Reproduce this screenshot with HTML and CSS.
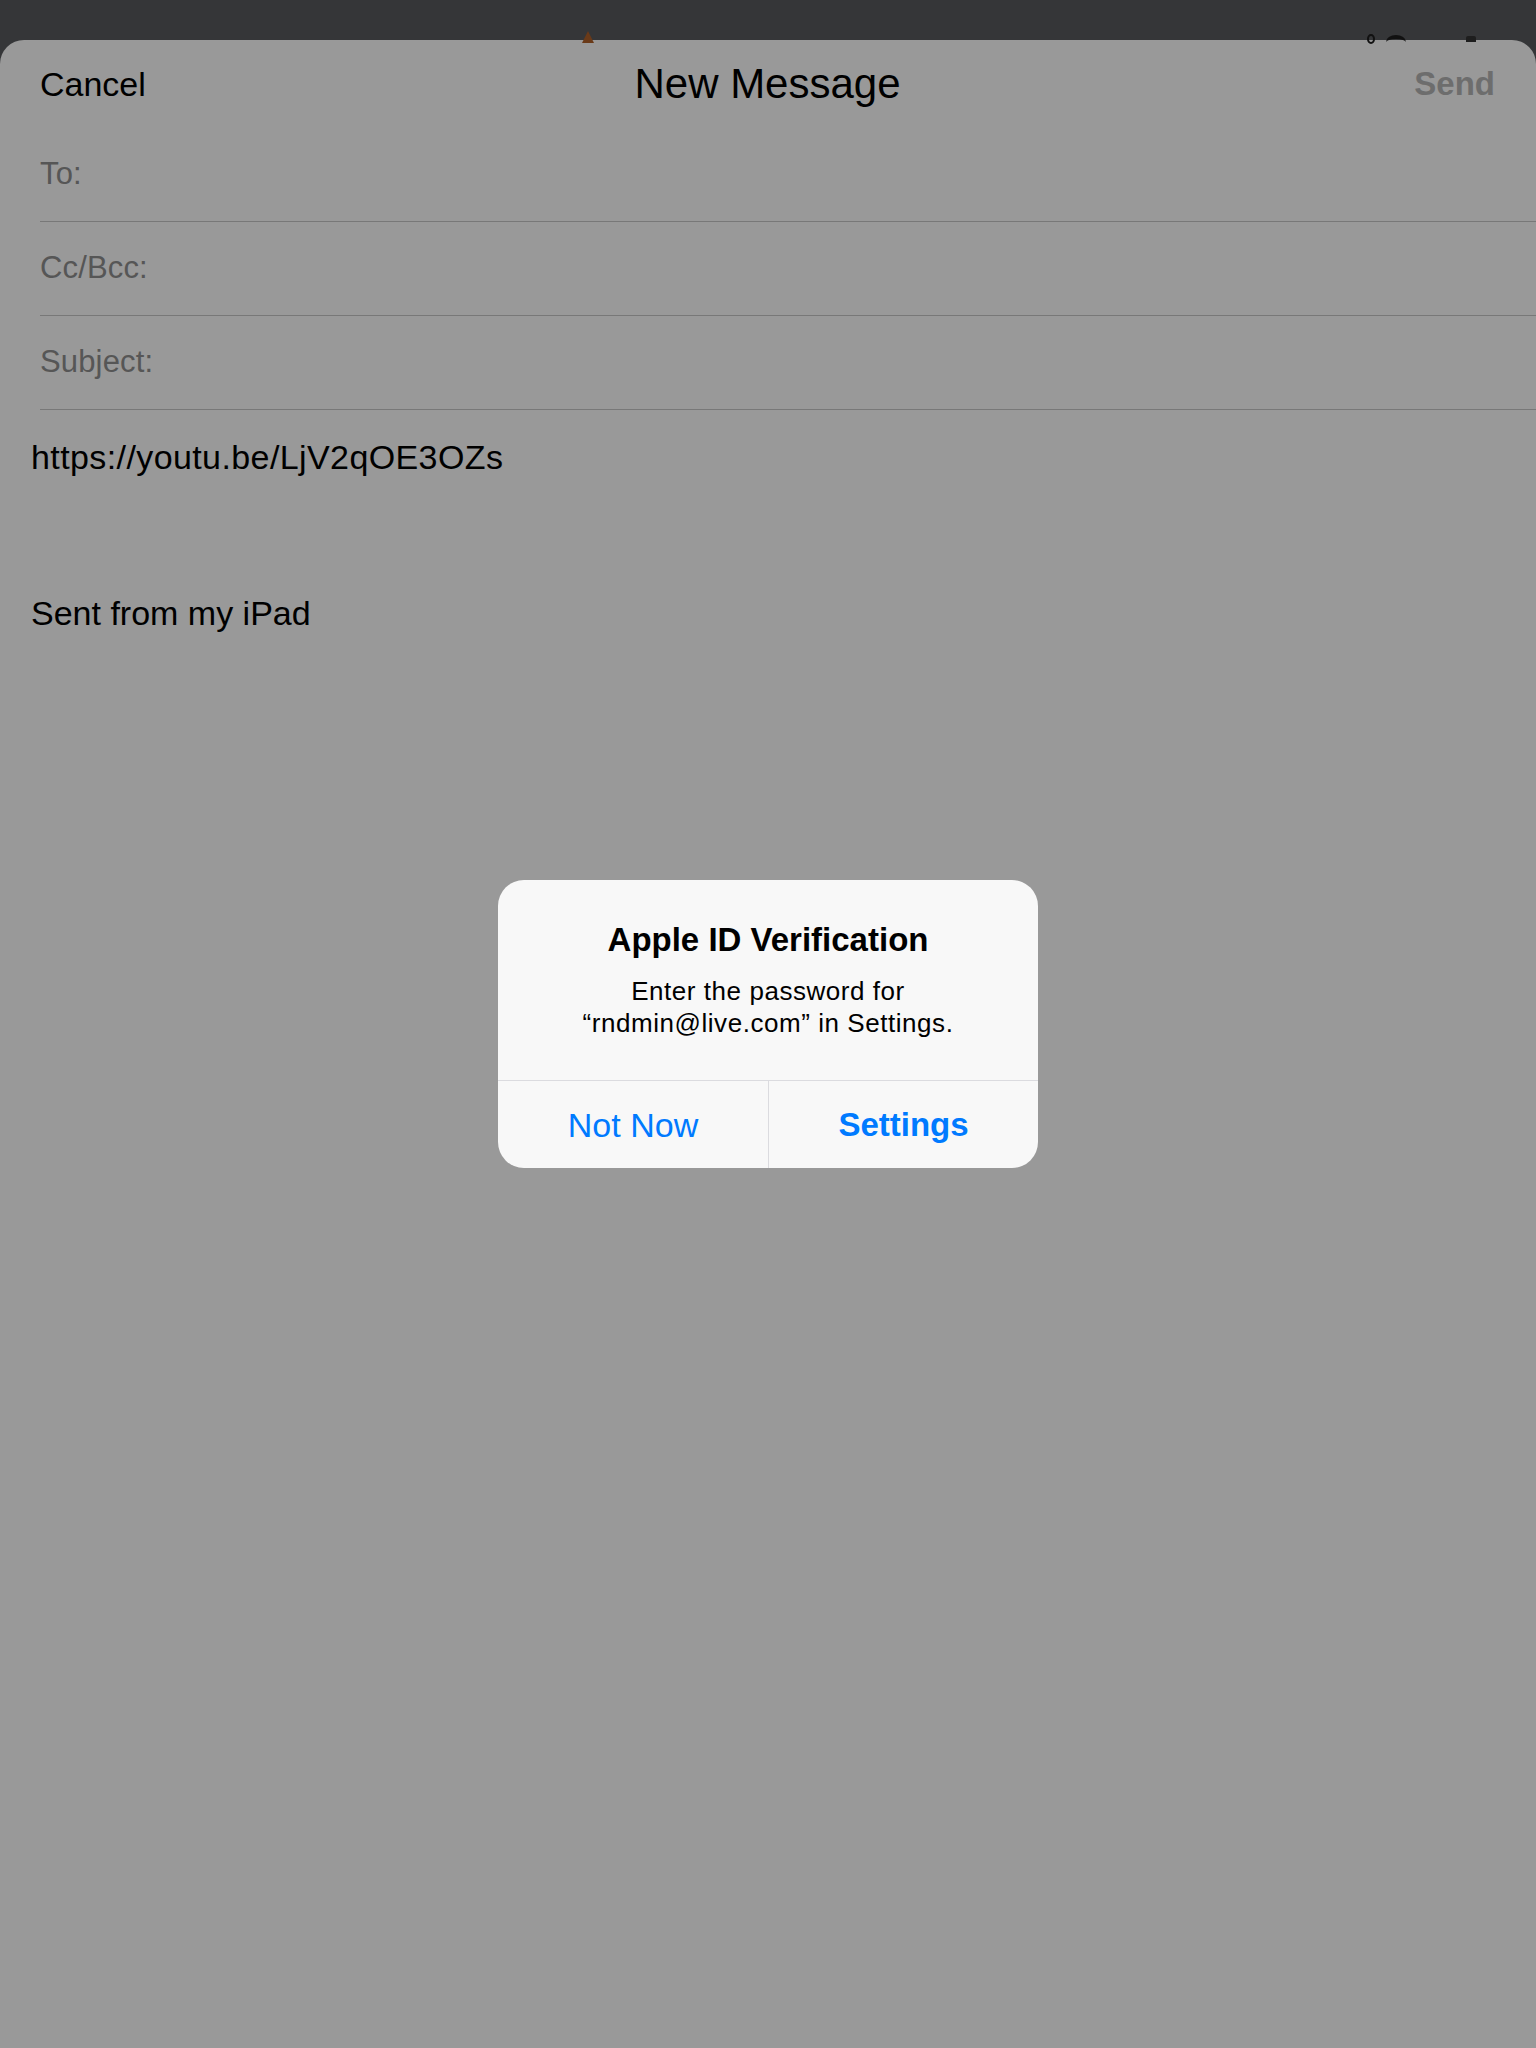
FILE: index.html
```html
<!DOCTYPE html>
<html lang="en">
<head>
<meta charset="utf-8">
<title>New Message</title>
<link rel="stylesheet" href="styles.css">
</head>
<body>
<div class="topbar">
  <span class="peek peek-orange"></span>
  <span class="peek peek-loop"></span>
  <span class="peek peek-arc"></span>
  <span class="peek peek-rect"></span>
</div>
<main class="sheet">
  <header class="header">
    <span class="cancel">Cancel</span>
    <h1 class="title">New Message</h1>
    <span class="send">Send</span>
  </header>
  <div class="field"><span class="label">To:</span></div>
  <div class="field"><span class="label">Cc/Bcc:</span></div>
  <div class="field"><span class="label">Subject:</span></div>
  <div class="body">
    <p class="line line-url">https://youtu.be/LjV2qOE3OZs</p>
    <p class="line">&nbsp;</p>
    <p class="line">&nbsp;</p>
    <p class="line">Sent from my iPad</p>
  </div>
</main>
<div class="alert">
  <div class="alert-content">
    <h2 class="alert-title">Apple ID Verification</h2>
    <p class="alert-message">Enter the password for<br>“rndmin@live.com” in Settings.</p>
  </div>
  <div class="alert-buttons">
    <span class="alert-btn">Not Now</span>
    <span class="alert-btn alert-btn-bold">Settings</span>
  </div>
</div>
</body>
</html>
```
FILE: styles.css
```css
html, body {
  margin: 0;
  padding: 0;
}
body {
  background: #353638;
  font-family: "Liberation Sans", Arial, sans-serif;
  width: 1536px;
  height: 2048px;
  overflow: hidden;
  position: relative;
}
.topbar {
  height: 40px;
  position: relative;
}
.peek {
  position: absolute;
  display: block;
}
.peek-orange {
  left: 582px;
  top: 31px;
  width: 12px;
  height: 12px;
  background: #6a3a18;
  border-radius: 50% 50% 0 0;
  clip-path: polygon(50% 0, 100% 100%, 0 100%);
}
.peek-loop {
  left: 1367px;
  top: 34px;
  width: 8px;
  height: 10px;
  border: 2px solid #111;
  border-radius: 50%;
  box-sizing: border-box;
}
.peek-arc {
  left: 1386px;
  top: 35px;
  width: 20px;
  height: 14px;
  border-top: 4px solid #111;
  border-radius: 50% 50% 0 0;
  box-sizing: border-box;
}
.peek-rect {
  left: 1466px;
  top: 36px;
  width: 10px;
  height: 6px;
  background: #1e1e1e;
  border-radius: 2px 2px 0 0;
}
.sheet {
  background: #999999;
  border-radius: 24px 24px 0 0;
  height: 2008px;
}
.header {
  height: 88px;
  display: grid;
  grid-template-columns: 1fr auto 1fr;
  align-items: center;
  padding: 0 41px 0 40px;
}
.cancel {
  justify-self: start;
  font-size: 34px;
  line-height: 34px;
  color: #000;
}
.title {
  margin: 0;
  font-size: 42px;
  line-height: 38px;
  font-weight: 400;
  color: #000;
}
.send {
  justify-self: end;
  font-size: 33px;
  line-height: 34px;
  font-weight: 700;
  color: #6d6d6d;
}
.field {
  margin-left: 40px;
  height: 93px;
  border-bottom: 1px solid #787878;
  display: flex;
  align-items: center;
  padding-bottom: 2px;
  box-sizing: border-box;
  height: 94px;
}
.label {
  font-size: 31px;
  line-height: 30px;
  letter-spacing: 0.15px;
  color: #565656;
}
.body {
  padding: 21px 0 0 31px;
}
.line {
  margin: 0;
  font-size: 34px;
  line-height: 52px;
  color: #000;
}
.line-url {
  letter-spacing: 0.4px;
}
.alert {
  position: absolute;
  top: 880px;
  left: 498px;
  width: 540px;
  background: #f8f8f8;
  border-radius: 26px;
  overflow: hidden;
}
.alert-content {
  height: 200px;
  box-sizing: border-box;
  padding-top: 40px;
  text-align: center;
}
.alert-title {
  margin: 0;
  font-size: 33px;
  line-height: 40px;
  font-weight: 700;
  color: #000;
}
.alert-message {
  margin: 15px 0 0;
  font-size: 26px;
  line-height: 32px;
  letter-spacing: 0.55px;
  color: #000;
}
.alert-buttons {
  display: grid;
  grid-template-columns: 1fr 1fr;
  border-top: 1px solid #dbdbdf;
  height: 87px;
}
.alert-btn {
  display: flex;
  align-items: center;
  justify-content: center;
  font-size: 34px;
  line-height: 34px;
  color: #007aff;
}
.alert-btn + .alert-btn {
  border-left: 1px solid #dbdbdf;
}
.alert-btn-bold {
  font-weight: 700;
  font-size: 33px;
}
```
